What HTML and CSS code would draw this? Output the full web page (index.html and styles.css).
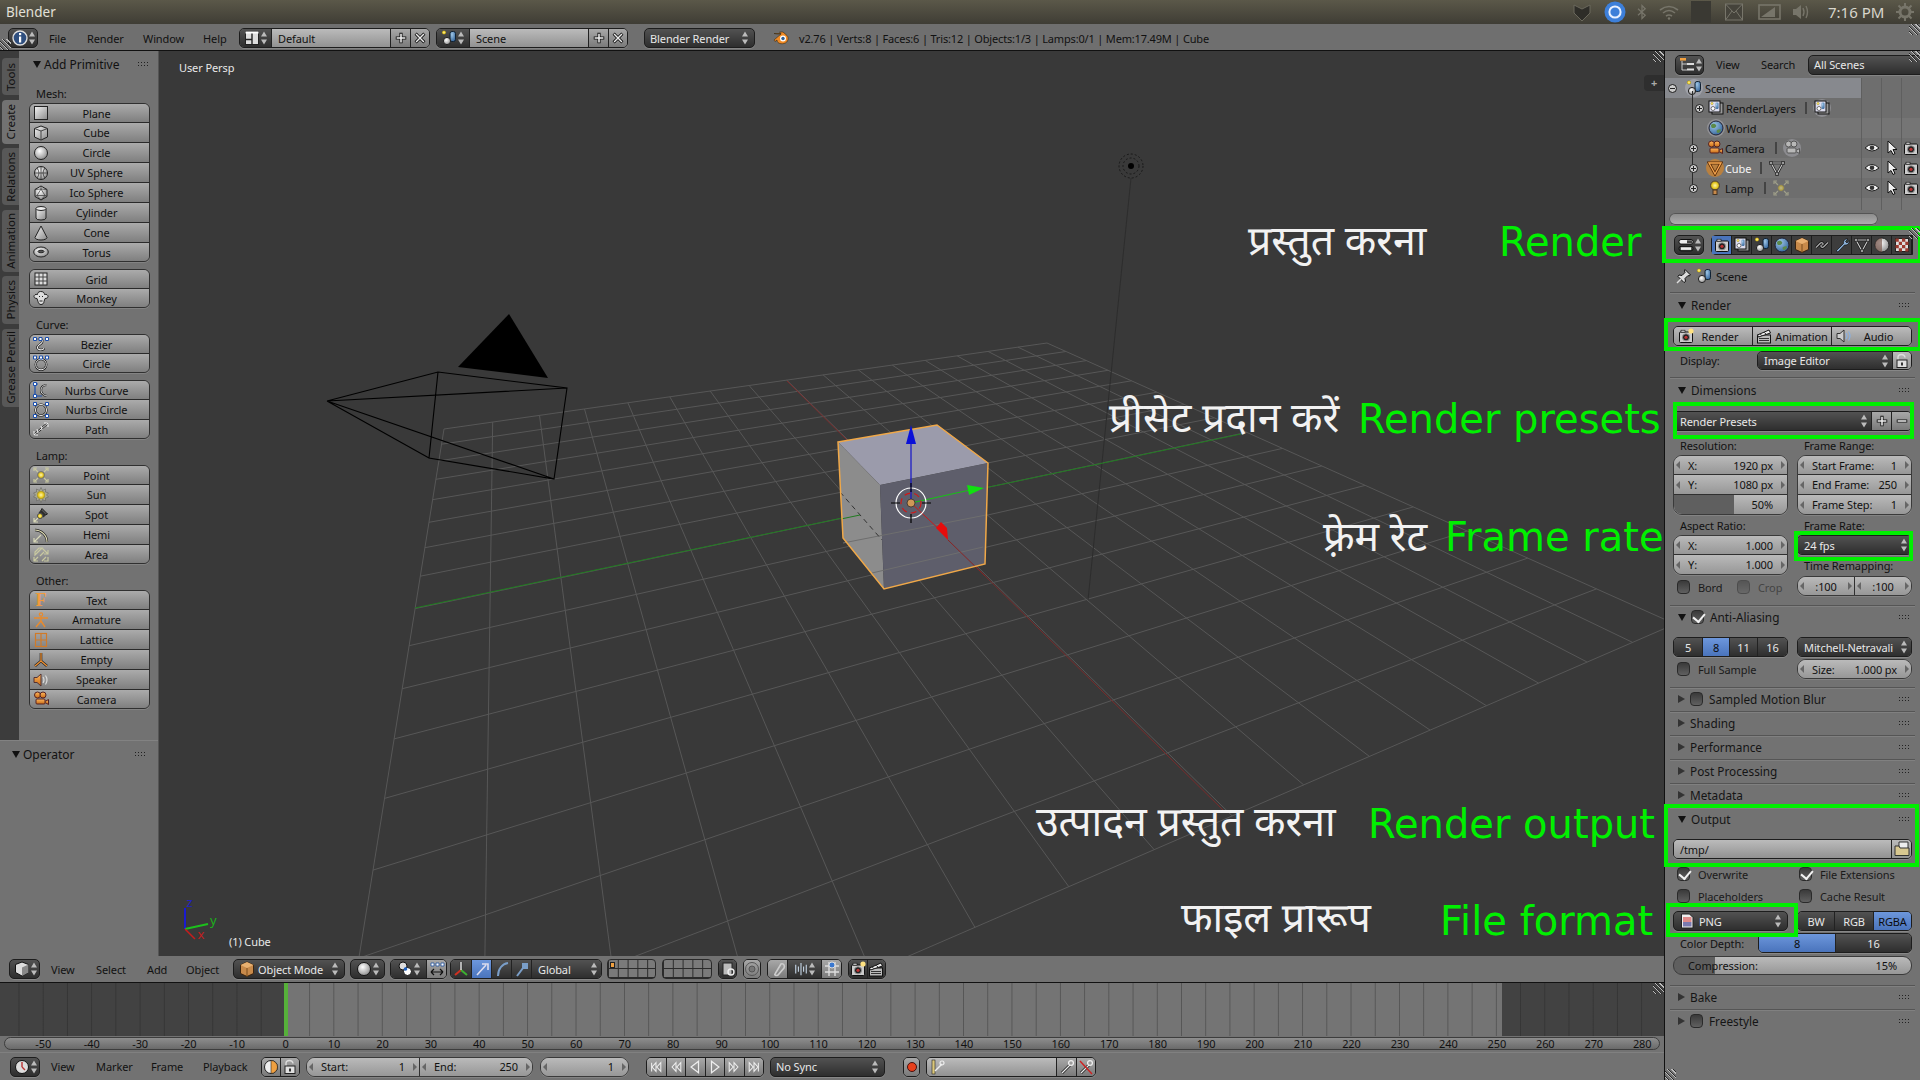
FILE: index.html
```html
<!DOCTYPE html>
<html lang="en">
<head>
<meta charset="utf-8">
<title>Blender</title>
<link rel="stylesheet" href="styles.css">
</head>
<body>
<svg class="sprite" xmlns="http://www.w3.org/2000/svg">
<defs>
<linearGradient id="gw" x1="0" y1="0" x2="1" y2="1"><stop offset="0" stop-color="#f4f4f4"/><stop offset="1" stop-color="#8a8a8a"/></linearGradient>
<linearGradient id="go" x1="0" y1="0" x2="0" y2="1"><stop offset="0" stop-color="#ffb860"/><stop offset="1" stop-color="#c86a14"/></linearGradient>
<radialGradient id="gs" cx=".4" cy=".35" r=".7"><stop offset="0" stop-color="#fff"/><stop offset="1" stop-color="#8a8a8a"/></radialGradient>
<radialGradient id="gy" cx=".5" cy=".5" r=".55"><stop offset="0" stop-color="#fff6b0"/><stop offset=".6" stop-color="#e6c820"/><stop offset="1" stop-color="#8a7a20"/></radialGradient>
<radialGradient id="gb" cx=".35" cy=".3" r=".8"><stop offset="0" stop-color="#a0c8e8"/><stop offset="1" stop-color="#2e5f96"/></radialGradient>
</defs>
<symbol id="plane" viewBox="0 0 16 16"><rect x="1.5" y="1.5" width="13" height="13" fill="url(#gw)" stroke="#222"/></symbol>
<symbol id="cube" viewBox="0 0 16 16"><path d="M8 1 14.5 3.5V12L8 15 1.5 12V3.5Z" fill="url(#gw)" stroke="#222"/><path d="M1.5 3.5 8 6l6.5-2.500M8 6v9" fill="none" stroke="#444"/></symbol>
<symbol id="circle" viewBox="0 0 16 16"><circle cx="8" cy="8" r="6.500" fill="url(#gs)" stroke="#222"/></symbol>
<symbol id="uv" viewBox="0 0 16 16"><circle cx="8" cy="8" r="6.500" fill="url(#gs)" stroke="#222"/><path d="M1.500 8h13M8 1.500v13M4 3Q8 8 4 13M12 3Q8 8 12 13" fill="none" stroke="#333" stroke-width=".8"/></symbol>
<symbol id="ico" viewBox="0 0 16 16"><path d="M8 1 14 4.500v7L8 15 2 11.500v-7Z" fill="url(#gs)" stroke="#222"/><path d="M8 4 4 10.500h8ZM8 1v3M2 4.500 8 4l6 .5M2 11.500l2-1M14 11.500l-2-1M8 15 4 10.500M8 15l4-4.500" fill="none" stroke="#333" stroke-width=".7"/></symbol>
<symbol id="cyl" viewBox="0 0 16 16"><path d="M3 3.500v9.500a5 2 0 0 0 10 0V3.500Z" fill="url(#gw)" stroke="#222"/><ellipse cx="8" cy="3.500" rx="5" ry="2" fill="#eee" stroke="#222"/></symbol>
<symbol id="cone" viewBox="0 0 16 16"><path d="M8 1 2 12.500a6 2.500 0 0 0 12 0Z" fill="url(#gw)" stroke="#222"/></symbol>
<symbol id="torus" viewBox="0 0 16 16"><ellipse cx="8" cy="8" rx="7.300" ry="5" fill="url(#gs)" stroke="#222"/><ellipse cx="8" cy="7.500" rx="3" ry="1.300" fill="#555" stroke="#222"/></symbol>
<symbol id="gridi" viewBox="0 0 16 16"><rect x="2" y="2" width="12" height="12" fill="#ddd" stroke="#222"/><path d="M6 2v12M10 2v12M2 6h12M2 10h12" stroke="#444"/></symbol>
<symbol id="monkey" viewBox="0 0 16 16"><path d="M8 1.500c3 0 3.500 2 3.500 3 2-.5 3.500.5 3.500 2s-1.500 2-3 2l-1 3c0 2-1.500 3-3 3s-2.500-1-3-3l-1-3c-1.500 0-3-.5-3-2s1.500-2.500 3.500-2c0-1 .5-3 3-3Z" fill="#ddd" stroke="#222"/><path d="M6 6.500h1M9 6.500h1M6.500 11h3" stroke="#222"/></symbol>
<symbol id="bezier" viewBox="0 0 16 16"><path d="M2 3h5c3 0 3 3 1 4.500S3 11 5 13c2 1.500 6 1 6-1" fill="none" stroke="#111" stroke-width="2.200"/><path d="M2 3h5c3 0 3 3 1 4.500S3 11 5 13c2 1.500 6 1 6-1" fill="none" stroke="#eee" stroke-width="1.100"/><path d="M.5 1.500h3v3h-3ZM6 1.500h3v3H6ZM12.500 1.500h3v3h-3Z" fill="#fff" stroke="#1b4fae"/></symbol>
<symbol id="ccircle" viewBox="0 0 16 16"><circle cx="8" cy="9.500" r="5.300" fill="none" stroke="#111" stroke-width="2.200"/><circle cx="8" cy="9.500" r="5.300" fill="none" stroke="#eee"/><path d="M.5 1h3v3h-3ZM6.500 1h3v3h-3ZM12.500 1h3v3h-3Z" fill="#fff" stroke="#1b4fae"/></symbol>
<symbol id="nurbs" viewBox="0 0 16 16"><path d="M2 2v12h7M2 2h3" fill="none" stroke="#1b4fae" stroke-width="1.200"/><path d="M14 3C6 3 6 13 14 14" fill="none" stroke="#111" stroke-width="2.200"/><path d="M14 3C6 3 6 13 14 14" fill="none" stroke="#eee"/><path d="M.5.5h3v3h-3ZM.5 12.500h3v3h-3Z" fill="#fff" stroke="#1b4fae"/></symbol>
<symbol id="ncircle" viewBox="0 0 16 16"><circle cx="8" cy="8" r="5.500" fill="none" stroke="#111" stroke-width="2.200"/><circle cx="8" cy="8" r="5.500" fill="none" stroke="#eee"/><path d="M.5.5h3v3h-3ZM12.500.5h3v3h-3ZM.5 12.500h3v3h-3ZM12.500 12.500h3v3h-3Z" fill="#fff" stroke="#1b4fae"/></symbol>
<symbol id="pathi" viewBox="0 0 16 16"><path d="M1 14 15 2" stroke="#111" stroke-width="2.200"/><path d="M1 14 15 2M11 2h4v4M4 8l1 4M8 5l1 4M1 10v4h4" fill="none" stroke="#eee"/></symbol>
<symbol id="point" viewBox="0 0 16 16"><circle cx="8" cy="8" r="3.500" fill="url(#gy)" stroke="#777"/><path d="M1 4V1h3M12 1h3v3M1 12v3h3M12 15h3v-3M2 2l3 3M14 2l-3 3M2 14l3-3M14 14l-3-3" fill="none" stroke="#c8c8a0" stroke-width="1.200"/></symbol>
<symbol id="sun" viewBox="0 0 16 16"><path d="M8 .5 9.500 3.500 12.500 2 12.500 5 15.500 6 13.500 8 15.500 10 12.500 11 12.500 14 9.500 12.500 8 15.500 6.500 12.500 3.500 14 3.500 11 .5 10 2.500 8 .5 6 3.500 5 3.500 2 6.500 3.500Z" fill="#a8a890" stroke="#666" stroke-width=".6"/><circle cx="8" cy="8" r="4" fill="url(#gy)"/></symbol>
<symbol id="spot" viewBox="0 0 16 16"><path d="M7 4 12 9" stroke="#333" stroke-width="4"/><path d="M9 1.500 14.500 7l-2 1-4.500-4.500Z" fill="#555" stroke="#222"/><circle cx="7" cy="9" r="2.600" fill="url(#gy)" stroke="#555"/><path d="M1 15l4-4M1 11v4h4" fill="none" stroke="#d8d8b8" stroke-width="1.200"/></symbol>
<symbol id="hemi" viewBox="0 0 16 16"><path d="M2 3c6 0 12 5 12 12" fill="none" stroke="#222" stroke-width="2.400"/><path d="M2 3c6 0 12 5 12 12" fill="none" stroke="#e4e0b8" stroke-width="1.200"/><path d="M1 15l7-7M1 11v4h4" fill="none" stroke="#d8d8b8" stroke-width="1.200"/></symbol>
<symbol id="area" viewBox="0 0 16 16"><path d="M2 6 6 2h3l-7 7ZM7 10l4-4M1 15l4-4M1 11v4h4M9 15l4-4M11 15h4v-4M9 2l6 6M15 4v4h-4" fill="none" stroke="#c8c8a0" stroke-width="1.200"/></symbol>
<symbol id="arm" viewBox="0 0 16 16"><circle cx="8" cy="2.500" r="1.700" fill="none" stroke="#e88a2c" stroke-width="1.200"/><path d="M1 6h14M8 4.500V9L3 15M8 9l4 6" fill="none" stroke="#e88a2c" stroke-width="1.400"/></symbol>
<symbol id="lat" viewBox="0 0 16 16"><rect x="2.500" y="1.500" width="11" height="13" fill="none" stroke="#d07a28" stroke-width="1.200"/><path d="M8 1.500v13M2.500 8h11" stroke="#d07a28" stroke-width="1.200"/></symbol>
<symbol id="emp" viewBox="0 0 16 16"><path d="M8 1v8L2 14M8 9l6 5" fill="none" stroke="#222" stroke-width="2.600"/><path d="M8 1v8L2 14M8 9l6 5" fill="none" stroke="#f09030" stroke-width="1.300"/></symbol>
<symbol id="spk" viewBox="0 0 16 16"><path d="M1 5.500h3L8 2v12L4 10.500H1Z" fill="url(#go)" stroke="#533"/><path d="M10 5q2 3 0 6M12.500 3.500q3 4.500 0 9" fill="none" stroke="#dcdcdc" stroke-width="1.200"/></symbol>
<symbol id="spkb" viewBox="0 0 16 16"><path d="M1 5.500h3L8 2v12L4 10.500H1Z" fill="#ccc" stroke="#333"/><path d="M10 5q2 3 0 6M12.500 3.500q3 4.500 0 9" fill="none" stroke="#8ab0e0" stroke-width="1.200"/></symbol>
<symbol id="cam" viewBox="0 0 16 16"><circle cx="4.500" cy="4" r="3" fill="url(#go)" stroke="#522"/><circle cx="10" cy="4" r="3" fill="url(#go)" stroke="#522"/><rect x="3" y="8" width="9" height="5" rx="1" fill="url(#go)" stroke="#522"/><path d="M12 10.500 15.500 8.500v5l-3.500-2" fill="url(#go)" stroke="#522"/></symbol>
<symbol id="camg" viewBox="0 0 16 16"><circle cx="4.500" cy="4" r="3" fill="#b8b8b8" stroke="#555"/><circle cx="10" cy="4" r="3" fill="#b8b8b8" stroke="#555"/><rect x="3" y="8" width="9" height="5" rx="1" fill="#b8b8b8" stroke="#555"/><path d="M12 10.500 15.500 8.500v5l-3.500-2" fill="#b8b8b8" stroke="#555"/></symbol>
<symbol id="ud" viewBox="0 0 8 16"><path d="M4 1.500 7 6.500H1ZM4 14.500 1 9.500h6Z" fill="#bbb"/></symbol>
<symbol id="info" viewBox="0 0 16 16"><circle cx="8" cy="8" r="7" fill="#2f4f7f" stroke="#ddd" stroke-width="1.400"/><rect x="7" y="6.500" width="2.200" height="6" fill="#fff"/><rect x="7" y="3" width="2.200" height="2.200" fill="#fff"/></symbol>
<symbol id="layout" viewBox="0 0 16 16"><rect x="1.500" y="1.500" width="13" height="13" fill="#ddd" stroke="#222"/><path d="M8 1.500v13M1.500 9.500H8" stroke="#222" stroke-width="1.400"/><rect x="1.500" y="1.500" width="13" height="2" fill="#fff"/></symbol>
<symbol id="scene" viewBox="0 0 16 16"><circle cx="3" cy="2.500" r="2" fill="url(#gy)"/><rect x="9" y="1.500" width="5.500" height="10" rx="2" fill="url(#gb)" stroke="#123"/><circle cx="6" cy="11" r="3.600" fill="url(#gs)" stroke="#222"/></symbol>
<symbol id="plus" viewBox="0 0 16 16"><path d="M8 2v12M2 8h12" stroke="#111" stroke-width="3.600"/><path d="M8 3v10M3 8h10" stroke="#eee" stroke-width="1.800"/></symbol>
<symbol id="minus" viewBox="0 0 16 16"><path d="M2 8h12" stroke="#111" stroke-width="3.600"/><path d="M3 8h10" stroke="#eee" stroke-width="1.800"/></symbol>
<symbol id="cross" viewBox="0 0 16 16"><path d="M3 3l10 10M13 3 3 13" stroke="#111" stroke-width="3.400"/><path d="M3.500 3.500l9 9M12.500 3.500l-9 9" stroke="#eee" stroke-width="1.600"/></symbol>
<symbol id="blogo" viewBox="0 0 18 18"><path d="M2 11 9 5h-4l-3-.5h7L7.500 3l3.500 0 4 3.500c2 2 1.500 7-3 8s-7-1-7-3.500L3 12.500Z" fill="#f08a24" stroke="#3a2a10" stroke-width=".6"/><circle cx="11" cy="9.500" r="3" fill="#fff"/><circle cx="11" cy="9.500" r="1.700" fill="#2e5f96"/></symbol>
<symbol id="outl" viewBox="0 0 16 16"><rect x="1" y="1" width="6" height="2.600" fill="#f0a040"/><rect x="8" y="6" width="7" height="2" fill="#ddd"/><rect x="8" y="11.500" width="7" height="2" fill="#ddd"/><path d="M3 4v9h5M3 7h5" fill="none" stroke="#ccc"/></symbol>
<symbol id="propi" viewBox="0 0 16 16"><rect x="1" y="2.500" width="14" height="4.600" rx="2" fill="#eee" stroke="#111"/><rect x="9" y="3.300" width="5" height="3" fill="#444"/><rect x="1" y="9.300" width="14" height="4.600" rx="2" fill="#555" stroke="#111"/><rect x="3" y="10.300" width="10" height="2.600" fill="#eee"/></symbol>
<symbol id="rcam" viewBox="0 0 16 16"><rect x="1.500" y="4" width="13" height="10.500" rx="1" fill="#ccc" stroke="#111"/><rect x="3" y="2.200" width="4" height="2" fill="#ccc" stroke="#111" stroke-width=".6"/><circle cx="8" cy="9.300" r="3.600" fill="#222" stroke="#999"/><circle cx="8" cy="9.300" r="1.600" fill="#b33"/></symbol>
<symbol id="rcamp" viewBox="0 0 16 16"><use href="#rcam"/><circle cx="13" cy="3" r="2.600" fill="#fde080"/></symbol>
<symbol id="rlay" viewBox="0 0 16 16"><rect x="4" y="3" width="11" height="11" fill="#999" stroke="#111"/><rect x="1" y="1" width="11" height="11" fill="#dde" stroke="#111"/><circle cx="4" cy="3.500" r="1.300" fill="url(#gy)"/><rect x="7.500" y="2.500" width="3" height="6.500" rx="1.300" fill="url(#gb)"/><circle cx="5" cy="8.500" r="2" fill="#fff" stroke="#222" stroke-width=".6"/></symbol>
<symbol id="world" viewBox="0 0 16 16"><circle cx="8" cy="8" r="7" fill="url(#gb)" stroke="#223"/><path d="M3 5c2-2 4-1 5 0s-1 3-2 3-3 1-3-3ZM9 10c2-1 4-1 4 0s-2 3-3 3-2-2-1-3Z" fill="#5c8a4a"/></symbol>
<symbol id="obj" viewBox="0 0 16 16"><path d="M8 1 14.500 4v8.500L8 15.500 1.500 12.500V4Z" fill="#c88a4a" stroke="#3a2410"/><path d="M1.500 4 8 7l6.500-3L8 1Z" fill="#e8b070"/><path d="M8 7v8.500" stroke="#7a4c1c"/></symbol>
<symbol id="link" viewBox="0 0 16 16"><path d="M2 10.500 6 6.500c2-2 4 0 2.500 1.500M14 5.500l-4 4c-2 2-4 0-2.500-1.500" fill="none" stroke="#111" stroke-width="2.800"/><path d="M2 10.500 6 6.500c2-2 4 0 2.500 1.500M14 5.500l-4 4c-2 2-4 0-2.500-1.500" fill="none" stroke="#aaa" stroke-width="1.300"/></symbol>
<symbol id="wrench" viewBox="0 0 16 16"><path d="M2 14 9.500 6.500c-.5-3 1.500-5 4.500-4.500l-2.500 2.500 1.500 1.500L15 3.500c.5 3-1.500 5-4.500 4.500L4 15Z" fill="#8ab0d8" stroke="#111" stroke-width=".7"/></symbol>
<symbol id="tri" viewBox="0 0 16 16"><path d="M2 3h12L8 14Z" fill="none" stroke="#111" stroke-width="2.400"/><path d="M2 3h12L8 14Z" fill="none" stroke="#ccc" stroke-width="1.100"/><path d="M.5 1.500h3v3h-3ZM12.500 1.500h3v3h-3ZM6.500 12.500h3v3h-3Z" fill="#999" stroke="#111" stroke-width=".6"/></symbol>
<symbol id="otri" viewBox="0 0 16 16"><path d="M2 3h12L8 14Z" fill="none" stroke="#5a2c08" stroke-width="2.800"/><path d="M2 3h12L8 14Z" fill="none" stroke="#f8a850" stroke-width="1.300"/></symbol>
<symbol id="mat" viewBox="0 0 16 16"><circle cx="8" cy="8" r="7" fill="url(#gs)" stroke="#222"/><path d="M8 1a7 7 0 0 0 0 14Z" fill="#7a5a50" opacity=".7"/></symbol>
<symbol id="tex" viewBox="0 0 16 16"><rect x="1.500" y="1.500" width="13" height="13" fill="#ddd" stroke="#222"/><path d="M1.500 1.500h3.300v3.300H1.500ZM8 1.500h3.300v3.300H8ZM4.800 4.800H8V8H4.800ZM11.300 4.800h3.200V8h-3.200ZM1.500 8h3.300v3.300H1.500ZM8 8h3.300v3.300H8ZM4.800 11.300H8v3.200H4.800ZM11.300 11.300h3.200v3.200h-3.200Z" fill="#9c3a30"/></symbol>
<symbol id="eye" viewBox="0 0 16 16"><path d="M1 8q7-7 14 0q-7 6-14 0Z" fill="#f2f2f2" stroke="#222"/><circle cx="8" cy="7.800" r="2.300" fill="#333"/></symbol>
<symbol id="ptr" viewBox="0 0 16 16"><path d="M4 1v12l3-2.500 2 4 2-1-2-4h4Z" fill="#eee" stroke="#111"/></symbol>
<symbol id="bulb" viewBox="0 0 16 16"><circle cx="8" cy="5.500" r="4.500" fill="url(#gy)" stroke="#543"/><rect x="6" y="10" width="4" height="4.500" fill="#c88a4a" stroke="#432"/></symbol>
<symbol id="pin" viewBox="0 0 16 16"><path d="M9 1.500 14.500 7 13 8l-1-.5-3 3 .5 3-1.500 1L2 8.500l1-1.500 3 .5 3-3L8.500 3Z" fill="#ddd" stroke="#111"/><path d="M1 15 5 11" stroke="#ddd" stroke-width="1.400"/></symbol>
<symbol id="clap" viewBox="0 0 16 16"><rect x="1.500" y="7" width="13" height="8" fill="#bbb" stroke="#111"/><path d="M1.500 7 13 2l1.500 3L2.500 9Z" fill="#eee" stroke="#111"/><path d="M4 5.800 6 7.800M8 4.100l2 2M3 10.500h10M3 12.500h10" stroke="#333"/></symbol>
<symbol id="lock" viewBox="0 0 16 16"><path d="M4 7V4.500a3.500 3 0 0 1 7 0" fill="none" stroke="#ddd" stroke-width="1.400"/><rect x="3" y="7" width="10" height="7.500" fill="#e0e0e0" stroke="#222"/><rect x="7" y="9.500" width="2" height="3" fill="#333"/></symbol>
<symbol id="folder" viewBox="0 0 16 16"><path d="M5 1h9v7H5Z" fill="#eee" stroke="#333"/><path d="M1 5h4l1 2h9v7.500H1Z" fill="#d8c890" stroke="#333"/></symbol>
<symbol id="pngi" viewBox="0 0 16 16"><path d="M2.500 1h8L14 4.500V15H2.500Z" fill="#eee" stroke="#222"/><rect x="4" y="4" width="8.500" height="5" fill="#e08a8a"/><rect x="4" y="9" width="8.500" height="4.500" fill="#7a7ab0"/></symbol>
<symbol id="vcube" viewBox="0 0 16 16"><path d="M8 1 14.500 3.500v8L8 15 1.500 11.500v-8Z" fill="#ddd" stroke="#111"/><path d="M8 6.500V15L14.500 11.500v-8Z" fill="#888"/></symbol>
<symbol id="sph" viewBox="0 0 16 16"><circle cx="8" cy="8" r="6.500" fill="url(#gs)" stroke="#111"/></symbol>
<symbol id="pivot" viewBox="0 0 16 16"><circle cx="6" cy="5" r="4" fill="#ddd" stroke="#111"/><circle cx="10.500" cy="10.500" r="4" fill="#fff" stroke="#111"/><circle cx="8.500" cy="8" r="1.800" fill="#1b5fc0"/></symbol>
<symbol id="dbl" viewBox="0 0 16 16"><path d="M2 2h3v3H2ZM7 2h3v3H7ZM12 2h3v3h-3Z" fill="#fff" stroke="#2050a0" stroke-width=".8"/><path d="M2 11h12M2 11l3-3M2 11l3 3M14 11l-3-3M14 11l-3 3" fill="none" stroke="#111" stroke-width="1.200"/></symbol>
<symbol id="axes" viewBox="0 0 16 16"><path d="M8 1v8" stroke="#2a2a2a" stroke-width="2.600"/><path d="M8 9 2 14" stroke="#d03020" stroke-width="2"/><path d="M8 9l6 5" stroke="#3cb030" stroke-width="2"/><path d="M8 1v8" stroke="#f0f0f0" stroke-width="1.400"/></symbol>
<symbol id="arr" viewBox="0 0 16 16"><path d="M3 14 12 4M8 3h6v6" fill="none" stroke="#dde" stroke-width="1.600"/></symbol>
<symbol id="rot" viewBox="0 0 16 16"><path d="M4 15C4 8 8 3 14 2" fill="none" stroke="#7a9ec8" stroke-width="2"/></symbol>
<symbol id="scl" viewBox="0 0 16 16"><path d="M3 15 9 7" stroke="#7a9ec8" stroke-width="2"/><rect x="8" y="2" width="6" height="6" fill="#7a9ec8"/></symbol>
<symbol id="prop" viewBox="0 0 16 16"><circle cx="8" cy="8" r="6.500" fill="none" stroke="#555"/><circle cx="8" cy="8" r="3" fill="#777" stroke="#555"/></symbol>
<symbol id="mag" viewBox="0 0 16 16"><path d="M5 13 11 3c3-1 4 2 3 4L8 14c-2 1-4 0-3-1Z" fill="none" stroke="#ccc" stroke-width="1.600"/></symbol>
<symbol id="tick" viewBox="0 0 16 16"><path d="M2 3v10M14 3v10M8 1v14M5 5v6M11 5v6" stroke="#cde" stroke-width="1.200"/></symbol>
<symbol id="snap" viewBox="0 0 16 16"><path d="M1 5h14M1 11h14M5 1v14M11 1v14" stroke="#ddd" stroke-width="1.400"/><circle cx="8" cy="4" r="3" fill="#3a78d0" stroke="#ddd"/></symbol>
<symbol id="lock2" viewBox="0 0 16 16"><rect x="3" y="2" width="9" height="12" fill="#bbb" stroke="#222"/><circle cx="11" cy="11" r="3" fill="none" stroke="#eee" stroke-width="1.400"/></symbol>
<symbol id="clock" viewBox="0 0 16 16"><circle cx="8" cy="8" r="6.500" fill="#ddd" stroke="#111"/><path d="M8 8V3M8 8l3 3" stroke="#b33" stroke-width="1.400"/></symbol>
<symbol id="range" viewBox="0 0 16 16"><circle cx="8" cy="8" r="6.500" fill="#eee" stroke="#222"/><path d="M8 8V1.500A6.500 6.500 0 0 1 8 14.500Z" fill="#f0a040" stroke="#222" stroke-width=".6"/></symbol>
<symbol id="first" viewBox="0 0 16 16"><path d="M3 3v10M8 3 3.500 8 8 13ZM13.500 3 9 8l4.500 5Z" fill="none" stroke="#eee" stroke-width="1.200"/></symbol>
<symbol id="prev" viewBox="0 0 16 16"><path d="M8 3 3.500 8 8 13ZM13.500 3 9 8l4.500 5Z" fill="none" stroke="#eee" stroke-width="1.200"/></symbol>
<symbol id="back" viewBox="0 0 16 16"><path d="M12 1.500 3.500 8l8.500 6.500Z" fill="none" stroke="#eee" stroke-width="1.400"/></symbol>
<symbol id="play" viewBox="0 0 16 16"><path d="M4 1.500 12.500 8 4 14.500Z" fill="none" stroke="#eee" stroke-width="1.400"/></symbol>
<symbol id="next" viewBox="0 0 16 16"><path d="M8 3l4.500 5L8 13ZM2.500 3 7 8l-4.500 5Z" fill="none" stroke="#eee" stroke-width="1.200"/></symbol>
<symbol id="last" viewBox="0 0 16 16"><path d="M13 3v10M8 3l4.500 5L8 13ZM2.500 3 7 8l-4.500 5Z" fill="none" stroke="#eee" stroke-width="1.200"/></symbol>
<symbol id="rec" viewBox="0 0 16 16"><circle cx="8" cy="8" r="4.500" fill="#e8401c" stroke="#411"/></symbol>
<symbol id="key" viewBox="0 0 16 16"><rect x="3" y="1" width="3" height="14" fill="#dcc87a" stroke="#222" stroke-width=".6"/><path d="M6 12 13 5" stroke="#eee" stroke-width="1.400"/><circle cx="13" cy="4" r="2" fill="none" stroke="#eee" stroke-width="1.200"/></symbol>
<symbol id="key2" viewBox="0 0 16 16"><path d="M3 14 11 6" stroke="#111" stroke-width="2.600"/><path d="M3 14 11 6" stroke="#eee" stroke-width="1.300"/><circle cx="12" cy="4" r="2.400" fill="none" stroke="#eee" stroke-width="1.300"/></symbol>
<symbol id="key3" viewBox="0 0 16 16"><use href="#key2"/><path d="M2 2 14 15" stroke="#d02020" stroke-width="1.400"/></symbol>
<symbol id="shield" viewBox="0 0 20 20"><path d="M2 3 10 7l8-4v8l-8 8-8-8Z" fill="#2e2d28" stroke="#6a685c"/></symbol>
<symbol id="chrome" viewBox="0 0 22 22"><circle cx="11" cy="11" r="10.500" fill="#3d7fd9"/><circle cx="11" cy="11" r="5.600" fill="none" stroke="#e8f0ff" stroke-width="2"/></symbol>
<symbol id="bt" viewBox="0 0 20 20"><path d="M5 6l9 8-4 4V2l4 4-9 8" fill="none" stroke="#77756a" stroke-width="1.600"/></symbol>
<symbol id="wifi" viewBox="0 0 20 20"><path d="M1 8q9-7 18 0M4 11q6-5 12 0M7 14q3-2 6 0" fill="none" stroke="#77756a" stroke-width="1.600"/><circle cx="10" cy="16.500" r="1.200" fill="#77756a"/></symbol>
<symbol id="mail" viewBox="0 0 20 20"><rect x="1.500" y="2" width="17" height="16" fill="#45433b" stroke="#77756a"/><path d="M1.500 2 10 11l8.500-9M1.500 18 8 9M18.500 18 12 9" fill="none" stroke="#77756a"/></symbol>
<symbol id="batt" viewBox="0 0 24 20"><rect x="1" y="3" width="21" height="14" fill="none" stroke="#77756a" stroke-width="1.600"/><path d="M3 15 17 5v10Z" fill="#77756a"/></symbol>
<symbol id="vol" viewBox="0 0 20 20"><path d="M2 7h3l5-4v14l-5-4H2Z" fill="#77756a"/><path d="M12 6q2 4 0 8M15 4q3 6 0 12" fill="none" stroke="#77756a" stroke-width="1.400"/></symbol>
<symbol id="gear" viewBox="0 0 20 20"><circle cx="10" cy="10" r="5" fill="none" stroke="#77756a" stroke-width="3"/><path d="M10 1v4M10 15v4M1 10h4M15 10h4M3.500 3.500l3 3M13.500 13.500l3 3M3.500 16.500l3-3M13.500 6.500l3-3" stroke="#77756a" stroke-width="2"/></symbol>
</svg>

<div class="app">
  <header class="title">
    <span class="title-name">Blender</span>
    <div class="tray">
      <svg class="tr tr1"><use href="#shield"/></svg>
      <svg class="tr tr2"><use href="#chrome"/></svg>
      <svg class="tr tr3"><use href="#bt"/></svg>
      <svg class="tr tr4"><use href="#wifi"/></svg>
      <span class="tr-box"></span>
      <svg class="tr tr5"><use href="#mail"/></svg>
      <svg class="tr tr6"><use href="#batt"/></svg>
      <svg class="tr tr7"><use href="#vol"/></svg>
      <span class="clock-time">7:16 PM</span>
      <svg class="tr tr8"><use href="#gear"/></svg>
    </div>
  </header>

  <nav class="hdr hdr-info">
    <span class="hatch hatch-bl"></span><span class="hatch hatch-tr"></span>
    <div class="drop w30 pl8"><svg class="ic"><use href="#info"/></svg><svg class="udi"><use href="#ud"/></svg></div>
    <span class="menu ml11 w38">File</span><span class="menu w56">Render</span><span class="menu w60">Window</span><span class="menu w36">Help</span>
    <div class="seg w191">
      <div class="seg-dark w31"><svg class="ic"><use href="#layout"/></svg><svg class="udi"><use href="#ud"/></svg></div>
      <div class="seg-light flex1">Default</div>
      <div class="seg-btn w20"><svg class="ic ic14"><use href="#plus"/></svg></div>
      <div class="seg-btn w19"><svg class="ic ic14"><use href="#cross"/></svg></div>
    </div>
    <div class="seg w192 ml6">
      <div class="seg-dark w32"><svg class="ic"><use href="#scene"/></svg><svg class="udi"><use href="#ud"/></svg></div>
      <div class="seg-light flex1">Scene</div>
      <div class="seg-btn w20"><svg class="ic ic14"><use href="#plus"/></svg></div>
      <div class="seg-btn w19"><svg class="ic ic14"><use href="#cross"/></svg></div>
    </div>
    <div class="drop w111 ml16 between"><span>Blender Render</span><svg class="udi"><use href="#ud"/></svg></div>
    <svg class="logo ml17"><use href="#blogo"/></svg>
    <span class="stats ml9">v2.76 | Verts:8 | Faces:6 | Tris:12 | Objects:1/3 | Lamps:0/1 | Mem:17.49M | Cube</span>
  </nav>

  <div class="main">
    <div class="left">
      <section class="viewport">
        <svg class="scene" viewBox="0 51 1664 905" xmlns="http://www.w3.org/2000/svg">
          <g id="floor" class="gridlines"></g>
          <line x1="1131" y1="178" x2="1088" y2="600" class="lampline"/>
          <line x1="787" y1="381" x2="1226" y2="813" class="ax-red"/>
          <line x1="415" y1="608" x2="1241" y2="434" class="ax-green"/>
          <path class="cam-wire" d="M327 401 438 372 567 388 554 479 429 458 438 372M327 401 567 388M327 401 554 479M327 401 429 458"/>
          <polygon class="cam-up" points="509,314 458,367 548,378"/>
          <polygon class="f-top" points="838,442 937,425 988,463 880,485"/>
          <polygon class="f-left" points="838,442 880,485 884,589 843,538"/>
          <polygon class="f-right" points="880,485 988,463 985,564 884,589"/>
          <line x1="843" y1="543" x2="986" y2="515" class="through"/>
          <line x1="872" y1="573" x2="983" y2="547" class="through"/>
          <line x1="840" y1="492" x2="882" y2="540" class="dash"/>
          <line x1="841" y1="519" x2="860" y2="515" class="over-green"/>
          <line x1="948" y1="540" x2="985" y2="576" class="over-red"/>
          <polygon class="f-out" points="838,442 937,425 988,463 985,564 884,589 843,538"/>
          <line x1="911" y1="503" x2="911" y2="437" class="m-blue"/>
          <polygon class="m-blue-h" points="911,425 906,444 916,444"/>
          <line x1="911" y1="503" x2="970" y2="490" class="m-green"/>
          <polygon class="m-green-h" points="984,488 967,485 969,495"/>
          <line x1="911" y1="503" x2="942" y2="532" class="m-red"/>
          <polygon class="m-red-h" points="948,540 936,528 941,522 947,528"/>
          <ellipse cx="911" cy="503" rx="15" ry="15" class="cur-w"/>
          <circle cx="911" cy="503" r="10" class="cur-r"/>
          <path class="cur-k" d="M891 503h9M922 503h9M911 483v9M911 514v9"/>
          <circle cx="911" cy="503" r="4" class="origin"/>
          <circle cx="1131" cy="166" r="12" class="lamp-d"/>
          <circle cx="1131" cy="166" r="8" class="lamp-d"/>
          <circle cx="1131" cy="166" r="3" class="lamp-c"/>
          <line x1="185" y1="929" x2="185" y2="908" class="a-z"/>
          <line x1="185" y1="929" x2="208" y2="924" class="a-y"/>
          <line x1="185" y1="929" x2="195" y2="939" class="a-x"/>
          <text x="186.500" y="907" class="t-z">z</text>
          <text x="210" y="925" class="t-y">y</text>
          <text x="197.500" y="939" class="t-x">x</text>
        </svg>

        <div class="toolcol">
          <div class="toolrow">
            <div class="tabs">
              <div class="tab t1"><span>Tools</span></div>
              <div class="tab t2 on"><span>Create</span></div>
              <div class="tab t3"><span>Relations</span></div>
              <div class="tab t4"><span>Animation</span></div>
              <div class="tab t5"><span>Physics</span></div>
              <div class="tab t6"><span>Grease Pencil</span></div>
            </div>
            <div class="tools">
              <div class="phead"><i class="tri-d"></i><span>Add Primitive</span><i class="dots"></i></div>
              <div class="lbl">Mesh:</div>
              <div class="grp">
                <div class="rw"><svg class="ic"><use href="#plane"/></svg><span>Plane</span></div>
                <div class="rw"><svg class="ic"><use href="#cube"/></svg><span>Cube</span></div>
                <div class="rw"><svg class="ic"><use href="#circle"/></svg><span>Circle</span></div>
                <div class="rw"><svg class="ic"><use href="#uv"/></svg><span>UV Sphere</span></div>
                <div class="rw"><svg class="ic"><use href="#ico"/></svg><span>Ico Sphere</span></div>
                <div class="rw"><svg class="ic"><use href="#cyl"/></svg><span>Cylinder</span></div>
                <div class="rw"><svg class="ic"><use href="#cone"/></svg><span>Cone</span></div>
                <div class="rw"><svg class="ic"><use href="#torus"/></svg><span>Torus</span></div>
              </div>
              <div class="grp mt7">
                <div class="rw"><svg class="ic"><use href="#gridi"/></svg><span>Grid</span></div>
                <div class="rw"><svg class="ic"><use href="#monkey"/></svg><span>Monkey</span></div>
              </div>
              <div class="lbl">Curve:</div>
              <div class="grp">
                <div class="rw"><svg class="ic"><use href="#bezier"/></svg><span>Bezier</span></div>
                <div class="rw"><svg class="ic"><use href="#ccircle"/></svg><span>Circle</span></div>
              </div>
              <div class="grp mt7">
                <div class="rw"><svg class="ic"><use href="#nurbs"/></svg><span>Nurbs Curve</span></div>
                <div class="rw"><svg class="ic"><use href="#ncircle"/></svg><span>Nurbs Circle</span></div>
                <div class="rw"><svg class="ic"><use href="#pathi"/></svg><span>Path</span></div>
              </div>
              <div class="lbl">Lamp:</div>
              <div class="grp">
                <div class="rw"><svg class="ic"><use href="#point"/></svg><span>Point</span></div>
                <div class="rw"><svg class="ic"><use href="#sun"/></svg><span>Sun</span></div>
                <div class="rw"><svg class="ic"><use href="#spot"/></svg><span>Spot</span></div>
                <div class="rw"><svg class="ic"><use href="#hemi"/></svg><span>Hemi</span></div>
                <div class="rw"><svg class="ic"><use href="#area"/></svg><span>Area</span></div>
              </div>
              <div class="lbl">Other:</div>
              <div class="grp">
                <div class="rw"><b class="ftx">F</b><span>Text</span></div>
                <div class="rw"><svg class="ic"><use href="#arm"/></svg><span>Armature</span></div>
                <div class="rw"><svg class="ic"><use href="#lat"/></svg><span>Lattice</span></div>
                <div class="rw"><svg class="ic"><use href="#emp"/></svg><span>Empty</span></div>
                <div class="rw"><svg class="ic"><use href="#spk"/></svg><span>Speaker</span></div>
                <div class="rw"><svg class="ic"><use href="#cam"/></svg><span>Camera</span></div>
              </div>
            </div>
          </div>
          <div class="operator">
            <div class="phead op"><i class="tri-d"></i><span>Operator</span><i class="dots"></i></div>
          </div>
        </div>

        <div class="vp-text vp-persp">User Persp</div>
        <div class="vp-text vp-obj">(1) Cube</div>
        <div class="vp-plus">+</div>
        <span class="hatch hatch-vp"></span>

        <div class="ann hi h1" lang="hi">प्रस्तुत करना</div><div class="ann en e1">Render</div>
        <div class="ann hi h2" lang="hi">प्रीसेट प्रदान करें</div><div class="ann en e2">Render presets</div>
        <div class="ann hi h3" lang="hi">फ़्रेम रेट</div><div class="ann en e3">Frame rate</div>
        <div class="ann hi h4" lang="hi">उत्पादन प्रस्तुत करना</div><div class="ann en e4">Render output</div>
        <div class="ann hi h5" lang="hi">फाइल प्रारूप</div><div class="ann en e5">File format</div>
      </section>

      <div class="hdr hdr-3d">
        <div class="drop w31 pl8"><svg class="ic"><use href="#vcube"/></svg><svg class="udi"><use href="#ud"/></svg></div>
        <span class="menu ml11 w45">View</span><span class="menu w51">Select</span><span class="menu w39">Add</span><span class="menu w47">Object</span>
        <div class="drop w112 gap3"><svg class="ic"><use href="#obj"/></svg><span class="flex1">Object Mode</span><svg class="udi"><use href="#ud"/></svg></div>
        <div class="drop w35 ml5"><svg class="ic"><use href="#sph"/></svg><svg class="udi"><use href="#ud"/></svg></div>
        <div class="seg w57 ml5">
          <div class="seg-dark flex1"><svg class="ic"><use href="#pivot"/></svg><svg class="udi"><use href="#ud"/></svg></div>
          <div class="seg-btn w20"><svg class="ic"><use href="#dbl"/></svg></div>
        </div>
        <div class="seg w152 ml3">
          <div class="seg-dark w20"><svg class="ic"><use href="#axes"/></svg></div>
          <div class="seg-blue w20"><svg class="ic"><use href="#arr"/></svg></div>
          <div class="seg-dark w20"><svg class="ic"><use href="#rot"/></svg></div>
          <div class="seg-dark w20"><svg class="ic"><use href="#scl"/></svg></div>
          <div class="seg-dark flex1 between txt"><span>Global</span><svg class="udi"><use href="#ud"/></svg></div>
        </div>
        <div class="layers w49 ml5"><i class="layer-dot"></i></div>
        <div class="layers w50 ml6"></div>
        <div class="seg w19 ml6"><div class="seg-dark flex1"><svg class="ic"><use href="#lock2"/></svg></div></div>
        <div class="seg w18 ml6"><div class="seg-btn flex1"><svg class="ic"><use href="#prop"/></svg></div></div>
        <div class="seg w75 ml6">
          <div class="seg-btn w19"><svg class="ic"><use href="#mag"/></svg></div>
          <div class="seg-dark flex1"><svg class="ic ic14"><use href="#tick"/></svg><svg class="udi"><use href="#ud"/></svg></div>
          <div class="seg-btn w20"><svg class="ic"><use href="#snap"/></svg></div>
        </div>
        <div class="seg w38 ml6">
          <div class="seg-dark flex1"><svg class="ic"><use href="#rcamp"/></svg></div>
          <div class="seg-dark flex1"><svg class="ic"><use href="#clap"/></svg></div>
        </div>
      </div>

      <div class="timeline">
        <div class="tl-dark tl-l"></div><div class="tl-now"></div><div class="tl-mid"></div><div class="tl-dark tl-r"></div>
        <span class="hatch hatch-tl"></span>
      </div>
      <div class="ruler-wrap">
        <div class="ruler">
          <span>-50</span><span>-40</span><span>-30</span><span>-20</span><span>-10</span><span>0</span><span>10</span><span>20</span><span>30</span><span>40</span><span>50</span><span>60</span><span>70</span><span>80</span><span>90</span><span>100</span><span>110</span><span>120</span><span>130</span><span>140</span><span>150</span><span>160</span><span>170</span><span>180</span><span>190</span><span>200</span><span>210</span><span>220</span><span>230</span><span>240</span><span>250</span><span>260</span><span>270</span><span>280</span>
        </div>
      </div>
      <div class="hdr hdr-time">
        <div class="drop w30 pl8"><svg class="ic"><use href="#clock"/></svg><svg class="udi"><use href="#ud"/></svg></div>
        <span class="menu ml11 w45">View</span><span class="menu w55">Marker</span><span class="menu w52">Frame</span><span class="menu w58">Playback</span>
        <div class="seg w39">
          <div class="seg-btn flex1"><svg class="ic"><use href="#range"/></svg></div>
          <div class="seg-btn flex1"><svg class="ic"><use href="#lock"/></svg></div>
        </div>
        <div class="fld-h w227 ml6">
          <div class="fr"><span>Start:</span><b>1</b></div>
          <div class="fr"><span>End:</span><b>250</b></div>
        </div>
        <div class="fld-h w89 ml7">
          <div class="fr"><span></span><b>1</b></div>
        </div>
        <div class="seg w118 ml17 play">
          <div class="seg-btn flex1"><svg class="ic ic14"><use href="#first"/></svg></div>
          <div class="seg-btn flex1"><svg class="ic ic14"><use href="#prev"/></svg></div>
          <div class="seg-btn flex1"><svg class="ic ic14"><use href="#back"/></svg></div>
          <div class="seg-btn flex1"><svg class="ic ic14"><use href="#play"/></svg></div>
          <div class="seg-btn flex1"><svg class="ic ic14"><use href="#next"/></svg></div>
          <div class="seg-btn flex1"><svg class="ic ic14"><use href="#last"/></svg></div>
        </div>
        <div class="drop w115 ml6 between"><span>No Sync</span><svg class="udi"><use href="#ud"/></svg></div>
        <div class="seg w17 ml18"><div class="seg-btn flex1"><svg class="ic"><use href="#rec"/></svg></div></div>
        <div class="seg w170 ml6">
          <div class="seg-light flex1 keyset"><svg class="ic"><use href="#key"/></svg></div>
          <div class="seg-btn w20"><svg class="ic"><use href="#key2"/></svg></div>
          <div class="seg-btn w19"><svg class="ic"><use href="#key3"/></svg></div>
        </div>
      </div>
    </div>

    <aside class="right">
      <div class="outliner">
        <span class="hatch hatch-ol"></span>
        <div class="hdr hdr-ol">
          <div class="drop w29 pl6"><svg class="ic"><use href="#outl"/></svg><svg class="udi"><use href="#ud"/></svg></div>
          <span class="menu ml12 w45">View</span><span class="menu w47">Search</span>
          <div class="drop w130">All Scenes</div>
        </div>
        <div class="tree">
          <span class="treeline"></span>
          <div class="orow sel"><div class="omain i-scene"><i class="exp minus"></i><span class="oic round"><svg class="ic"><use href="#scene"/></svg></span><span>Scene</span></div><div class="ocols"><i></i><i></i><i></i></div></div>
          <div class="orow"><div class="omain i-rl"><i class="exp"></i><span class="oic"><svg class="ic"><use href="#rlay"/></svg></span><span>RenderLayers</span><i class="obar b1"></i><span class="oic round"><svg class="ic"><use href="#rlay"/></svg></span></div><div class="ocols"><i></i><i></i><i></i></div></div>
          <div class="orow"><div class="omain i-world"><span class="oic round"><svg class="ic"><use href="#world"/></svg></span><span>World</span></div><div class="ocols"><i></i><i></i><i></i></div></div>
          <div class="orow"><div class="omain i-obj"><i class="exp"></i><span class="oic"><svg class="ic"><use href="#cam"/></svg></span><span>Camera</span><i class="obar b2"></i><span class="oic round"><svg class="ic"><use href="#camg"/></svg></span></div><div class="ocols"><i><svg class="ic"><use href="#eye"/></svg></i><i><svg class="ic"><use href="#ptr"/></svg></i><i><svg class="ic"><use href="#rcam"/></svg></i></div></div>
          <div class="orow"><div class="omain i-obj"><i class="exp"></i><span class="oic hot"><svg class="ic"><use href="#otri"/></svg></span><span class="white">Cube</span><i class="obar b3"></i><span class="oic"><svg class="ic"><use href="#tri"/></svg></span></div><div class="ocols"><i><svg class="ic"><use href="#eye"/></svg></i><i><svg class="ic"><use href="#ptr"/></svg></i><i><svg class="ic"><use href="#rcam"/></svg></i></div></div>
          <div class="orow"><div class="omain i-obj"><i class="exp"></i><span class="oic"><svg class="ic"><use href="#bulb"/></svg></span><span>Lamp</span><i class="obar b4"></i><span class="oic dim"><svg class="ic"><use href="#point"/></svg></span></div><div class="ocols"><i><svg class="ic"><use href="#eye"/></svg></i><i><svg class="ic"><use href="#ptr"/></svg></i><i><svg class="ic"><use href="#rcam"/></svg></i></div></div>
          <div class="orow empty"><div class="omain"></div><div class="ocols"><i></i><i></i><i></i></div></div>
        </div>
        <div class="oscroll"><div class="othumb"></div></div>
      </div>

      <div class="props">
        <span class="hatch hatch-pr"></span>
        <div class="p-top">
          <div class="drop w30 pl8"><svg class="ic"><use href="#propi"/></svg><svg class="udi"><use href="#ud"/></svg></div>
          <div class="ptabs">
            <span class="ptab active"><svg class="ic"><use href="#rcam"/></svg></span>
            <span class="ptab"><svg class="ic"><use href="#rlay"/></svg></span>
            <span class="ptab"><svg class="ic"><use href="#scene"/></svg></span>
            <span class="ptab"><svg class="ic"><use href="#world"/></svg></span>
            <span class="ptab"><svg class="ic"><use href="#obj"/></svg></span>
            <span class="ptab"><svg class="ic"><use href="#link"/></svg></span>
            <span class="ptab"><svg class="ic"><use href="#wrench"/></svg></span>
            <span class="ptab"><svg class="ic"><use href="#tri"/></svg></span>
            <span class="ptab"><svg class="ic"><use href="#mat"/></svg></span>
            <span class="ptab"><svg class="ic"><use href="#tex"/></svg></span>
          </div>
        </div>
        <div class="ctx"><svg class="ic"><use href="#pin"/></svg><svg class="ic ctx-s"><use href="#scene"/></svg><span class="ctx-t">Scene</span></div>

        <div class="ph ph2"><i class="tri-d"></i><span>Render</span><i class="dots"></i></div>
        <div class="pb pb-render">
          <div class="seg h20 light3">
            <div class="seg-light w78 cen"><svg class="ic abs-ic"><use href="#rcamp"/></svg><span class="pl24">Render</span></div>
            <div class="seg-light w79 cen"><svg class="ic"><use href="#clap"/></svg><span>Animation</span></div>
            <div class="seg-light flex1 cen"><svg class="ic abs-ic"><use href="#spkb"/></svg><span class="pl24">Audio</span></div>
          </div>
          <div class="r-disp">
            <span class="dlabel">Display:</span>
            <div class="seg flex1 h19">
              <div class="seg-dark flex1 between txt"><span>Image Editor</span><svg class="udi"><use href="#ud"/></svg></div>
              <div class="seg-light w19 cen nopad"><svg class="ic"><use href="#lock"/></svg></div>
            </div>
          </div>
        </div>

        <div class="ph ph2"><i class="tri-d"></i><span>Dimensions</span><i class="dots"></i></div>
        <div class="pb pb-dim">
          <div class="seg h20">
            <div class="seg-dark flex1 between txt"><span>Render Presets</span><svg class="udi"><use href="#ud"/></svg></div>
            <div class="seg-btn w20"><svg class="ic ic14"><use href="#plus"/></svg></div>
            <div class="seg-btn w20"><svg class="ic ic14"><use href="#minus"/></svg></div>
          </div>
          <div class="cols2 mt6">
            <div>
              <div class="cap">Resolution:</div>
              <div class="fld">
                <div class="fr"><span>X:</span><b>1920 px</b></div>
                <div class="fr"><span>Y:</span><b>1080 px</b></div>
                <div class="fr slider noarrow sl53"><span></span><b>50%</b></div>
              </div>
              <div class="cap mt2">Aspect Ratio:</div>
              <div class="fld">
                <div class="fr"><span>X:</span><b>1.000</b></div>
                <div class="fr"><span>Y:</span><b>1.000</b></div>
              </div>
              <div class="checks mt2">
                <i class="cb"></i><span class="cbt w39t">Bord</span><i class="cb dim"></i><span class="cbt dimt">Crop</span>
              </div>
            </div>
            <div>
              <div class="cap">Frame Range:</div>
              <div class="fld">
                <div class="fr"><span>Start Frame:</span><b>1</b></div>
                <div class="fr"><span>End Frame:</span><b>250</b></div>
                <div class="fr"><span>Frame Step:</span><b>1</b></div>
              </div>
              <div class="cap mt2">Frame Rate:</div>
              <div class="seg h20"><div class="seg-dark flex1 between txt"><span>24 fps</span><svg class="udi"><use href="#ud"/></svg></div></div>
              <div class="cap cap19 mt2">Time Remapping:</div>
              <div class="fld-h h20">
                <div class="fr frc"><span>:100</span></div>
                <div class="fr frc"><span>:100</span></div>
              </div>
            </div>
          </div>
        </div>

        <div class="ph"><i class="tri-d"></i><i class="cb ck hdcb"></i><span>Anti-Aliasing</span><i class="dots"></i></div>
        <div class="pb pb-aa">
          <div class="cols2">
            <div class="seg h20">
              <div class="seg-dark w28 cen nopad">5</div><div class="seg-blue w27 cen">8</div><div class="seg-dark w28 cen nopad">11</div><div class="seg-dark flex1 cen nopad">16</div>
            </div>
            <div class="seg h20"><div class="seg-dark flex1 between txt"><span>Mitchell-Netravali</span><svg class="udi"><use href="#ud"/></svg></div></div>
          </div>
          <div class="cols2 mt2">
            <div class="checks"><i class="cb"></i><span class="cbt">Full Sample</span></div>
            <div class="fld-h h20"><div class="fr"><span>Size:</span><b>1.000 px</b></div></div>
          </div>
        </div>

        <div class="ph"><i class="tri-r"></i><i class="cb hdcb"></i><span>Sampled Motion Blur</span><i class="dots"></i></div>
        <div class="ph"><i class="tri-r"></i><span>Shading</span><i class="dots"></i></div>
        <div class="ph"><i class="tri-r"></i><span>Performance</span><i class="dots"></i></div>
        <div class="ph"><i class="tri-r"></i><span>Post Processing</span><i class="dots"></i></div>
        <div class="ph"><i class="tri-r"></i><span>Metadata</span><i class="dots"></i></div>

        <div class="ph"><i class="tri-d"></i><span>Output</span><i class="dots"></i></div>
        <div class="pb pb-out">
          <div class="seg h20">
            <div class="seg-light flex1">/tmp/</div>
            <div class="seg-light w20 cen nopad"><svg class="ic"><use href="#folder"/></svg></div>
          </div>
          <div class="cols2 optrows">
            <div class="checks"><i class="cb ck"></i><span class="cbt white">Overwrite</span></div>
            <div class="checks c2"><i class="cb ck"></i><span class="cbt white">File Extensions</span></div>
            <div class="checks"><i class="cb"></i><span class="cbt">Placeholders</span></div>
            <div class="checks c2"><i class="cb"></i><span class="cbt">Cache Result</span></div>
          </div>
          <div class="cols2 mt4">
            <div class="drop h20 gap4"><svg class="ic"><use href="#pngi"/></svg><span class="flex1">PNG</span><svg class="udi"><use href="#ud"/></svg></div>
            <div class="seg h20">
              <div class="seg-dark w36 cen nopad">BW</div><div class="seg-dark w39 cen nopad">RGB</div><div class="seg-blue flex1 cen">RGBA</div>
            </div>
          </div>
          <div class="cdepth mt2">
            <span class="dlabel w85">Color Depth:</span>
            <div class="seg flex1 h20"><div class="seg-blue w76 cen">8</div><div class="seg-dark flex1 cen nopad">16</div></div>
          </div>
          <div class="compress mt3 sl18"><span>Compression:</span><b>15%</b></div>
        </div>

        <div class="ph"><i class="tri-r"></i><span>Bake</span><i class="dots"></i></div>
        <div class="ph"><i class="tri-r"></i><i class="cb hdcb"></i><span>Freestyle</span><i class="dots"></i></div>
        <span class="hatch hatch-pb"></span>
      </div>
    </aside>
  </div>

  <div class="gbox g1"></div>
  <div class="gbox g2"></div>
  <div class="gbox g3"></div>
  <div class="gbox g4"></div>
  <div class="gbox g5"></div>
  <div class="gbox g6"></div>
</div>
<script src="grid.js"></script>
</body>
</html>
```

FILE: styles.css
```css
*{box-sizing:border-box}
html,body{margin:0;padding:0;background:#727272}
body{width:1920px;height:1080px;overflow:hidden;font-family:"Noto Sans","Open Sans",sans-serif;font-size:11px;letter-spacing:-.1px;color:#111}
.sprite{position:absolute;width:0;height:0}
.app{position:relative;width:1920px;height:1080px;display:flex;flex-direction:column;overflow:hidden}
.ftx{width:16px;text-align:center;flex:none;font-family:"Liberation Serif",serif;font-weight:700;font-size:18px;line-height:18px;color:#f09a3c;letter-spacing:0}

/* title bar */
.title{height:24px;display:flex;align-items:center;padding-left:6px;background:linear-gradient(#5b5849,#3f3d35);flex:none}
.title-name{font-size:13.5px;color:#e2e0d8;letter-spacing:0}
.tray{margin-left:auto;display:flex;align-items:center;height:24px}
.tr{height:20px;width:20px;flex:none}
.tr1{margin-right:12px}
.tr2{width:22px;height:22px;margin-right:8px}
.tr3{width:16px;margin-right:9px}
.tr4{width:20px;margin-right:12px}
.tr-box{width:20px;height:22px;background:#3a3933;margin-right:13px}
.tr5{width:20px;margin-right:14px}
.tr6{width:24px;margin-right:9px}
.tr7{width:20px;margin-right:17px}
.clock-time{font-size:15px;color:#d8d6cc;width:64px;white-space:nowrap;letter-spacing:0}
.tr8{margin-right:5px;margin-left:3px}

/* headers */
.hdr{position:relative;display:flex;align-items:center;background:#6f6f6f;flex:none}
.hdr-info{height:27px;padding:2px 0 0 8px;border-bottom:1px solid #111}
.hdr-3d{height:27px;padding-left:9px;border-bottom:1px solid #111;background:#727272}
.hdr-time{height:28px;padding-left:10px;border-top:1px solid #808080;background:#727272}
.hdr-ol{height:27px;padding-left:10px;overflow:hidden}
.menu{color:#111;white-space:nowrap;flex:none}

.drop,.seg-dark{color:#e8e8e8;background:linear-gradient(#525252,#2e2e2e)}
.drop{height:20px;display:flex;align-items:center;border:1px solid #1d1d1d;border-radius:5px;padding:0 5px;flex:none;white-space:nowrap;box-shadow:0 1px 0 rgba(255,255,255,.15)}
.pl8{padding-left:4px;padding-right:2px;justify-content:center}
.pl6{padding-left:4px;padding-right:1px;justify-content:center}
.between{justify-content:space-between}
.gap3{gap:3px}.gap4{gap:4px}
.flex1{flex:1 1 0;min-width:0}
.ic{width:16px;height:16px;flex:none;display:block}
.ic14{width:14px;height:14px}
.udi{width:8px;height:16px;flex:none;display:block}
.seg{height:20px;display:flex;border:1px solid #1d1d1d;border-radius:5px;overflow:hidden;flex:none;box-shadow:0 1px 0 rgba(255,255,255,.15)}
.seg.flex1{flex:1 1 0;min-width:0}
.seg>div{display:flex;align-items:center;border-left:1px solid #222;height:100%;white-space:nowrap}
.seg>div:first-child{border-left:0}
.seg-dark{justify-content:center;padding:0 1px}
.seg-dark.between{justify-content:space-between}
.seg-dark.txt{padding:0 3px 0 6px}
.seg-light{background:linear-gradient(#bbb,#929292);color:#111;padding-left:6px}
.seg-btn{background:linear-gradient(#a8a8a8,#7a7a7a);justify-content:center}
.seg-blue{background:linear-gradient(#6d97dc,#4a74bc);color:#0c0c0c;justify-content:center}
.cen{justify-content:center;padding-left:0;gap:3px}
.nopad{padding:0}
.keyset{padding-left:2px}
.logo{width:18px;height:18px;flex:none}
.stats{color:#111;white-space:nowrap;letter-spacing:-.17px}
.layers{height:20px;flex:none;position:relative;border:1px solid #2a2a2a;border-radius:4px;background:linear-gradient(90deg,#2a2a2a 1px,transparent 1px) 0 0/9.800px 100%,linear-gradient(#2a2a2a 1px,transparent 1px) 0 -1px/100% 9px,#7a7a7a}
.layer-dot{position:absolute;left:2px;top:2px;width:5px;height:6px;background:#f0a040;border:1px solid #222}

/* widths & offsets */
.w17{width:17px}.w18{width:18px}.w19{width:19px}.w20{width:20px}.w27{width:27px}.w28{width:28px}.w29{width:29px}.w30{width:30px}.w31{width:31px}.w32{width:32px}.w35{width:35px}.w36{width:36px}.w38{width:38px}.w39{width:39px}.w45{width:45px}.w47{width:47px}.w49{width:49px}.w50{width:50px}.w51{width:51px}.w52{width:52px}.w55{width:55px}.w56{width:56px}.w57{width:57px}.w58{width:58px}.w60{width:60px}.w75{width:75px}.w76{width:76px}.w78{width:78px}.w79{width:79px}.w85{width:85px}.w89{width:89px}.w111{width:111px}.w112{width:112px}.w115{width:115px}.w118{width:118px}.w130{width:130px}.w152{width:152px}.w170{width:170px}.w191{width:191px}.w192{width:192px}.w227{width:227px}
.ml3{margin-left:3px}.ml5{margin-left:5px}.ml6{margin-left:6px}.ml7{margin-left:7px}.ml9{margin-left:9px}.ml11{margin-left:11px}.ml12{margin-left:12px}.ml16{margin-left:16px}.ml17{margin-left:17px}.ml18{margin-left:18px}
.mt2{margin-top:2px}.mt3{margin-top:3px}.mt4{margin-top:4px}.mt6{margin-top:6px}.mt7{margin-top:7px}
.h19{height:19px}.h20{height:20px}

/* layout */
.main{flex:1;display:flex;min-height:0}
.left{width:1664px;display:flex;flex-direction:column;flex:none}
.right{flex:1;border-left:1px solid #111;display:flex;flex-direction:column;background:#727272;position:relative;min-width:0}

/* viewport */
.viewport{position:relative;height:905px;flex:none;background:#393939;overflow:hidden;display:flex}
.scene{position:absolute;left:0;top:0;width:1664px;height:905px}
.gridlines line{stroke:#575757;stroke-width:1}
.lampline{stroke:#2d2d2d}
.ax-red{stroke:#7a2c2c}
.ax-green{stroke:#217c21}
.over-green{stroke:#217c21}
.over-red{stroke:#8a2424}
.cam-wire{fill:none;stroke:#000;stroke-width:1.100}
.cam-up{fill:#000}
.f-top{fill:#9b9bab}.f-left{fill:#8c8c8c}.f-right{fill:#5e5e6b}
.through{stroke:#6e6e6e}
.dash{stroke:#333;stroke-dasharray:5 4}
.f-out{fill:none;stroke:#f0a848;stroke-width:1.500}
.m-blue{stroke:#1414c8;stroke-width:1.200}.m-blue-h{fill:#0a10d8}
.m-green{stroke:#18c018;stroke-width:1.200}.m-green-h{fill:#10e010}
.m-red{stroke:#c81c1c;stroke-width:1}.m-red-h{fill:#e60c0c}
.cur-w{fill:none;stroke:#fff;stroke-width:1.200}
.cur-r{fill:none;stroke:#d01818;stroke-width:1.200;stroke-dasharray:6 4}
.cur-k{fill:none;stroke:#000;stroke-width:1.200}
.origin{fill:#d09858;stroke:#222;stroke-width:.7}
.lamp-d{fill:none;stroke:#111;stroke-width:.8;stroke-dasharray:2 2}
.lamp-c{fill:#000}
.a-z{stroke:#1a1ad0;stroke-width:2}.a-y{stroke:#1cc01c;stroke-width:2}.a-x{stroke:#c81c1c;stroke-width:1.500}
.t-z{fill:#2222c0;font-size:13px}.t-y{fill:#1cb01c;font-size:13px}.t-x{fill:#c02020;font-size:13px}
.vp-text{position:absolute;color:#e8e8e8;white-space:nowrap}
.vp-persp{left:179px;top:9px}
.vp-obj{left:229px;top:883px}
.vp-plus{position:absolute;right:0;top:24px;width:20px;height:16px;background:#2e2e2e;border-radius:4px 0 0 4px;color:#aaa;font-weight:700;text-align:center;line-height:15px}

.hatch{position:absolute;width:11px;height:11px;background:repeating-linear-gradient(45deg,transparent 0 1.500px,#bbb 1.500px 2.500px,#2a2a2a 2.500px 3.500px)}
.hatch-bl{left:0;bottom:0}
.hatch-tr{right:0;top:0}
.hatch-vp{right:0;top:0}
.hatch-tl{right:0;top:0}
.hatch-ol{right:0;top:0;z-index:2}
.hatch-pr{right:0;top:0;z-index:2}
.hatch-pb{left:0;bottom:0}

/* tool shelf */
.toolcol{position:relative;width:159px;height:100%;display:flex;flex-direction:column;flex:none;border-right:1px solid #555}
.toolrow{height:689px;display:flex;flex:none}
.tabs{width:19px;flex:none;background:#3c3c3c;padding:7px 0 0 2px;display:flex;flex-direction:column;gap:4.500px}
.tab{background:#585858;border-radius:4px 0 0 4px;display:flex;align-items:center;justify-content:center;color:#111;flex:none}
.tab span{writing-mode:vertical-rl;transform:rotate(180deg);font-size:11.500px;letter-spacing:0;white-space:nowrap;line-height:16px}
.tab.on{background:#727272}
.t1{height:37px}.t2{height:44px}.t3{height:57px}.t4{height:62px}.t5{height:48px}.t6{height:78px}
.tools{flex:1;background:#727272;padding-left:10px;padding-right:8px}
.phead{height:26px;display:flex;align-items:center;padding-left:4px;font-size:12px;letter-spacing:0;color:#111}
.phead .dots{margin-left:auto;margin-right:1px}
.tri-d{width:0;height:0;border:4px solid transparent;border-top:7px solid #111;border-bottom:0;margin-right:3px;flex:none}
.tri-r{width:0;height:0;border:4px solid transparent;border-left:7px solid #333;border-right:0;margin-right:3px;flex:none}
.dots{width:12px;height:7px;flex:none;background:radial-gradient(circle,#222 .6px,transparent .9px) 0 0/3px 3px}
.lbl{height:26px;line-height:19px;padding:7px 0 0 7px;color:#111}
.grp{border:1px solid #303030;border-radius:6px;overflow:hidden;box-shadow:0 1px 0 rgba(255,255,255,.12)}
.rw{height:20px;display:flex;align-items:center;border-top:1px solid #2a2a2a;background:linear-gradient(#ababab,#7f7f7f);padding-left:3px}
.rw:first-child{height:18px;border-top:0}
.rw:last-child{height:19px}
.rw span{flex:1;text-align:center;padding-right:5px;white-space:nowrap}
.operator{flex:1;background:#727272;border-top:1px solid #828282;padding-left:8px}
.phead.op{height:26px;padding-left:4px;margin-right:11px}

/* annotations */
.ann{position:absolute;white-space:nowrap;line-height:1;letter-spacing:0}
.hi{color:#f2f2f2;font-family:"Noto Sans Devanagari","Lohit Devanagari","Noto Sans","DejaVu Sans",sans-serif;font-size:41px}
.en{color:#00f000;font-family:"DejaVu Sans",sans-serif;font-size:40px}
.h1{left:1248px;top:174px}.e1{left:1499px;top:171px}
.h2{left:1109px;top:351px}.e2{left:1358px;top:348px}
.h3{left:1323px;top:470px}.e3{left:1445px;top:466px}
.h4{left:1036px;top:755px}.e4{left:1368px;top:753px}
.h5{left:1181px;top:851px}.e5{left:1440px;top:850px}

/* timeline */
.timeline{position:relative;height:53px;display:flex;flex:none;background:#747474}
.timeline::after{content:"";position:absolute;inset:0;background:linear-gradient(90deg,rgba(30,30,30,.35) 1px,transparent 1px) 18.500px 0/24.230px 100%;pointer-events:none}
.tl-dark{background:#424242}
.tl-l{width:284px}
.tl-now{width:4px;background:#56b03a;z-index:1}
.tl-mid{flex:1}
.tl-r{width:162px}
.ruler-wrap{height:16px;background:#727272;padding:1px 4px 2px;flex:none}
.ruler{height:13px;border:1px solid #3d3d3d;border-radius:7px;background:linear-gradient(#8e8e8e,#6a6a6a);display:flex;align-items:center;padding-left:14px;overflow:hidden;color:#111;font-size:11px}
.ruler span{width:48.460px;text-align:center;flex:none}

/* fields */
.fld,.fld-h{border:1px solid #3a3a3a;border-radius:9px;overflow:hidden;background:linear-gradient(#b8b8b8,#969696);box-shadow:0 1px 0 rgba(255,255,255,.12)}
.fld-h{display:flex;height:20px;flex:none}
.fr{position:relative;height:20px;display:flex;align-items:center;justify-content:space-between;padding:0 14px;color:#111;white-space:nowrap;background:linear-gradient(#bababa,#979797)}
.fr b{font-weight:400}
.fld .fr{border-top:1px solid #303030}
.fld .fr:first-child{border-top:0;height:18px}
.fld-h .fr{flex:1 1 0;border-left:1px solid #303030;height:100%;min-width:0}
.fld-h .fr:first-child{border-left:0}
.fr::before,.fr::after{content:"";position:absolute;top:50%;margin-top:-4px;border:4px solid transparent}
.fr::before{left:2px;border-left:0;border-right:4px solid #666}
.fr::after{right:2px;border-right:0;border-left:4px solid #666}
.noarrow::before,.noarrow::after{display:none}
.frc{justify-content:center}
.slider{justify-content:flex-end;padding-right:14px}
.sl53{background:linear-gradient(90deg,#5f5f5f 53%,transparent 53%),linear-gradient(#bababa,#979797)}

/* outliner */
.outliner{position:relative;height:177px;flex:none;background:#727272}
.tree{position:relative}
.treeline{position:absolute;left:27px;top:13px;width:1px;height:98px;background:#2c2c2c}
.orow{display:flex;height:20px;background:#757575}
.orow:nth-child(odd){background:#6e6e6e}
.orow.sel{background:#6e6e6e}
.orow.sel .omain{background:#87898e}
.orow.empty{height:12px}
.omain{flex:1;display:flex;align-items:center;min-width:0;white-space:nowrap;overflow:hidden}
.ocols{display:flex;flex:none;width:59px}
.ocols i{width:20px;height:100%;display:flex;align-items:center;justify-content:center;border-left:1px solid #5f5f5f}
.ocols i:last-child{width:19px}
.i-scene{padding-left:1px}
.i-rl{padding-left:28px}
.i-world{padding-left:42px}
.i-obj{padding-left:22px}
.exp{width:9px;height:9px;margin:0 1.500px;border:1px solid #1a1a1a;border-radius:50%;flex:none;background:linear-gradient(#222,#222) center/5px 1px no-repeat,linear-gradient(#222,#222) center/1px 5px no-repeat,#ccc;position:relative;z-index:1}
.exp.minus{background:linear-gradient(#222,#222) center/5px 1px no-repeat,#ccc}
.oic{width:18px;height:18px;display:flex;align-items:center;justify-content:center;flex:none;border-radius:50%}
.round{background:rgba(220,220,235,.28)}
.hot{background:#b9803f}
.dim{opacity:.55}
.i-scene .oic{margin-left:7px;margin-right:2px}
.i-rl .oic:first-of-type{margin-left:2px;margin-right:1px}
.i-world .oic{margin-right:1px}
.i-obj .oic:first-of-type{margin-left:7px;margin-right:1px}
.obar{width:2px;height:12px;background:#444;flex:none}
.obar+.oic{margin-left:6px}
.b1{margin-left:9px}.b2{margin-left:10px}.b3{margin-left:9px}.b4{margin-left:10px}
.white{color:#f4f4f4}
.oscroll{height:18px;padding:3px 4px;background:#727272}
.othumb{height:12px;width:209px;border-radius:6px;background:linear-gradient(#8a8a8a,#b0b0b0);box-shadow:inset 0 0 0 1px #555}

/* properties */
.props{position:relative;flex:1;background:#727272;min-height:0}
.p-top{height:34px;display:flex;align-items:center;padding-left:9px;overflow:hidden}
.ptabs{display:flex;margin-left:7px;border:1px solid #1d1d1d;border-radius:5px 0 0 5px;height:20px;background:#3d3d3d;flex:none}
.ptab{width:20px;height:18px;display:flex;align-items:center;justify-content:center;border-right:1px solid #1d1d1d}
.ptab.active{background:#4a74bc}
.ctx{height:30px;display:flex;align-items:center;padding:0 0 2px 11px;color:#111}
.ctx-s{margin-left:4px}
.ctx-t{margin-left:4px;font-size:11.500px}
.ph{height:24px;margin:0 5px;display:flex;align-items:center;border-top:1px solid #555;box-shadow:inset 0 1px 0 #808080;padding:0 0 1px 8px;font-size:11.800px;letter-spacing:0;color:#151515}
.ph2{padding-top:1px;padding-bottom:0}
.ph .tri-d,.ph .tri-r{margin-right:5px}
.ph .dots{margin-left:auto;margin-right:5px}
.hdcb{margin-left:0;margin-right:6px;width:14px;height:14px}
.ph .hdcb{margin-left:0}
.pb{padding:0 8px}
.pb-render{padding-top:10px;height:61px}
.light3 .seg-light{border-left:1px solid #222}
.abs-ic{position:absolute;left:4px}
.seg-light.cen{position:relative}
.pl24{padding-left:14px}
.r-disp{display:flex;margin-top:5px;align-items:center}
.dlabel{width:84px;padding-left:7px;flex:none}
.pb-dim{padding-top:10px;height:204px}
.cols2{display:grid;grid-template-columns:115px 115px;column-gap:9px}
.cap{height:18px;line-height:18px;padding-left:7px;white-space:nowrap}
.cap19{height:19px}
.checks{display:flex;align-items:center;height:20px;padding-left:4px}
.cb{width:13px;height:14px;border:1px solid #2a2a2a;border-radius:4px;background:linear-gradient(#3a3a3a,#606060);flex:none;position:relative;display:block}
.cb.dim{opacity:.5}
.ck::after{content:"";position:absolute;left:3px;top:0;width:6px;height:9px;border:solid #f2f2f2;border-width:0 2px 2px 0;transform:rotate(40deg)}
.cbt{margin-left:8px;white-space:nowrap;color:#1a1a1a}
.w39t{width:39px;flex:none}
.dimt{color:#444}
.pb-aa{padding-top:8px;height:58px}
.pb-out{padding-top:8px;height:154px}
.optrows{margin-top:4px;grid-auto-rows:22px}
.optrows .checks{height:22px}
.checks.c2{padding-left:2px}
.cdepth{display:flex;align-items:center}
.cdepth .dlabel{width:85px}
.compress{height:19px;border:1px solid #3a3a3a;border-radius:9px;display:flex;justify-content:space-between;align-items:center;padding:0 14px;background:linear-gradient(90deg,#5f5f5f 17.500%,transparent 17.500%),linear-gradient(#bababa,#979797);color:#111}
.compress b{font-weight:400}

/* green highlight boxes */
.gbox{position:absolute;border:4px solid #00f000;pointer-events:none}
.g1{left:1662px;top:226px;width:258px;height:37px;border-right-width:2px}
.g2{left:1664px;top:318px;width:256px;height:33px;border-right-width:2px}
.g3{left:1673px;top:402px;width:241px;height:37px}
.g4{left:1794px;top:531px;width:119px;height:30px}
.g5{left:1664px;top:804px;width:255px;height:63px}
.g6{left:1666px;top:903px;width:132px;height:34px}
```

FILE: grid.js
```js
(function () {
  var corners = [[1047, 343], [444, 429], [318, 1212], [1675, 624]];
  var n = 16;
  var x0 = corners[0][0], y0 = corners[0][1], x1 = corners[1][0], y1 = corners[1][1];
  var x2 = corners[2][0], y2 = corners[2][1], x3 = corners[3][0], y3 = corners[3][1];
  var dx1 = x1 - x2, dx2 = x3 - x2, dx3 = x0 - x1 + x2 - x3;
  var dy1 = y1 - y2, dy2 = y3 - y2, dy3 = y0 - y1 + y2 - y3;
  var det = dx1 * dy2 - dx2 * dy1;
  var g = (dx3 * dy2 - dx2 * dy3) / det;
  var h = (dx1 * dy3 - dy1 * dx3) / det;
  var a = x1 - x0 + g * x1, b = x3 - x0 + h * x3;
  var d = y1 - y0 + g * y1, e = y3 - y0 + h * y3;
  function map(u, v) {
    var w = g * u + h * v + 1;
    return [(a * u + b * v + x0) / w, (d * u + e * v + y0) / w];
  }
  var group = document.getElementById('floor');
  function add(p, q) {
    var l = document.createElementNS('http://www.w3.org/2000/svg', 'line');
    l.setAttribute('x1', p[0].toFixed(1));
    l.setAttribute('y1', p[1].toFixed(1));
    l.setAttribute('x2', q[0].toFixed(1));
    l.setAttribute('y2', q[1].toFixed(1));
    group.appendChild(l);
  }
  for (var i = 0; i <= n; i++) {
    var t = i / n;
    add(map(t, 0), map(t, 1));
    add(map(0, t), map(1, t));
  }
})();
```
